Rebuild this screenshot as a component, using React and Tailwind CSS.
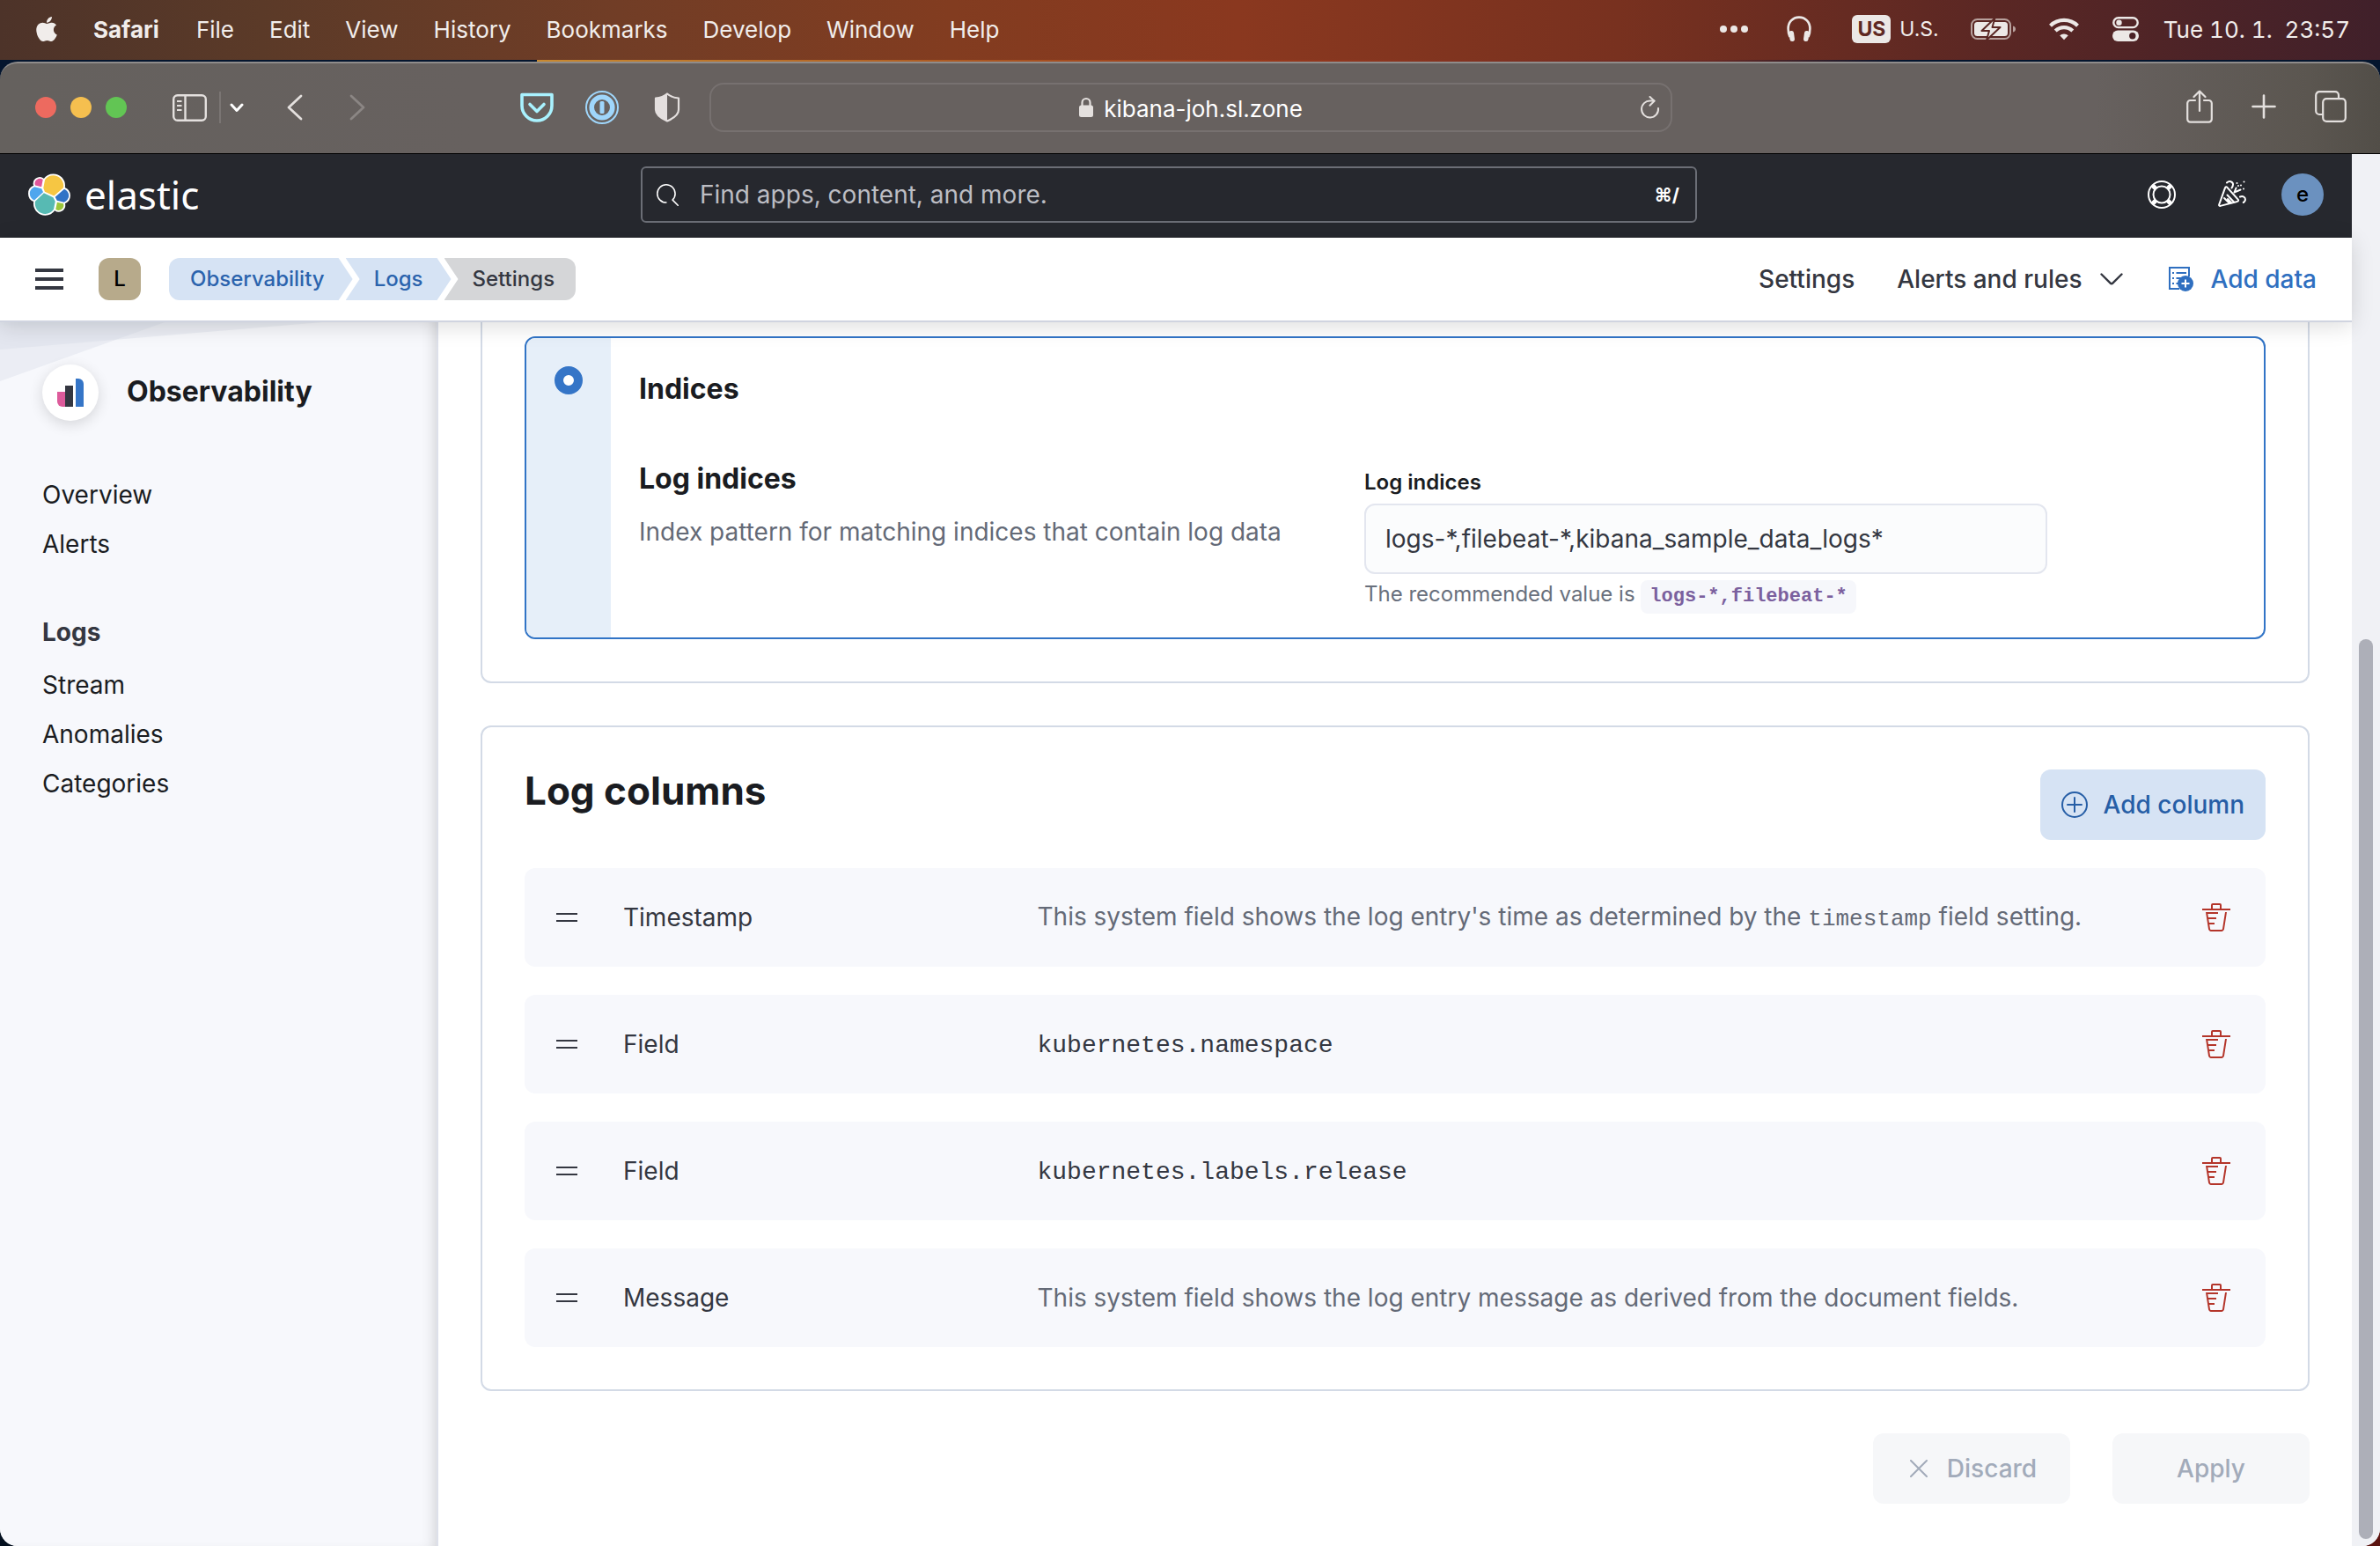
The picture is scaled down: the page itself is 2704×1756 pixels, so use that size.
import React from "react";
import { FaApple } from "react-icons/fa";

const menus = ["File", "Edit", "View", "History", "Bookmarks", "Develop", "Window", "Help"];

function HeadphonesIcon() {
  return (
    <svg className="h-[30px] w-7" viewBox="0 0 28 30" fill="none">
      <path d="M3.500 24C1.600 20 1.600 17.500 1.600 14.500 1.600 7.500 6.500 1.600 14 1.600S26.400 7.500 26.400 14.500c0 3 0 5.500-1.900 9.500" stroke="#ece8e6" strokeWidth="2.600" />
      <rect x="3" y="17" width="5.500" height="12" rx="2.700" fill="#ece8e6" transform="rotate(-8 5.700 23)" />
      <rect x="19.500" y="17" width="5.500" height="12" rx="2.700" fill="#ece8e6" transform="rotate(8 22.300 23)" />
    </svg>
  );
}

function BatteryIcon() {
  return (
    <svg className="h-[26px] w-[52px]" viewBox="0 0 52 26" fill="none">
      <rect x="1" y="2" width="44" height="22" rx="6.500" stroke="#b8a19d" strokeWidth="2" />
      <path d="M48 9.500c2 .6 3 1.800 3 3.500s-1 2.900-3 3.500z" fill="#b8a19d" />
      <rect x="4" y="5" width="38" height="16" rx="3.500" fill="#ece8e6" />
      <path d="M27.500 0.500 12.500 15h8.500L18 25.500l15.500-14.500h-9z" fill="#ece8e6" stroke="#5a2724" strokeWidth="2" strokeLinejoin="round" />
    </svg>
  );
}

function WifiIcon() {
  return (
    <svg className="h-[26px] w-[34px]" viewBox="0 0 34 26" fill="none" stroke="#ece8e6">
      <path d="M1.500 9.200a22.300 22.300 0 0 1 31 0" strokeWidth="4.200" />
      <path d="M7.200 15a14.200 14.200 0 0 1 19.600 0" strokeWidth="4.200" />
      <path d="M17 25.200l-4.800-4.900a7 7 0 0 1 9.600 0z" fill="#ece8e6" stroke="none" />
    </svg>
  );
}

function ControlCenterIcon() {
  return (
    <svg className="h-7 w-[30px]" viewBox="0 0 30 28" fill="none">
      <rect x="1.300" y="1.300" width="27.400" height="10.800" rx="5.400" stroke="#ece8e6" strokeWidth="2.400" />
      <circle cx="7.500" cy="6.700" r="3.200" fill="#ece8e6" />
      <rect x="0" y="15.500" width="30" height="12.500" rx="6.200" fill="#ece8e6" />
      <circle cx="22.800" cy="21.700" r="3.700" fill="#4a2226" />
    </svg>
  );
}

function MenuBar() {
  return (
    <header className="flex h-[68px] shrink-0 items-center bg-[linear-gradient(90deg,#4d3329_0%,#5b3a28_11%,#713d26_26%,#823c20_40%,#8a381f_52%,#78311f_68%,#5a2724_84%,#40202a_100%)] pr-[34px] pb-0.5 pl-[38px] text-[26px] text-[#f1edeb]">
      <button aria-label="Apple menu" className="mr-[38px]">
        <FaApple className="h-8 w-[30px]" />
      </button>
      <button className="mr-[42px] font-bold">Safari</button>
      <nav className="flex gap-10">
        {menus.map((m) => (
          <button key={m}>{m}</button>
        ))}
      </nav>
      <div className="ml-auto flex items-center">
        <svg className="mr-11 h-2 w-8" viewBox="0 0 32 8" fill="#ece8e6">
          <circle cx="4" cy="4" r="4" />
          <circle cx="16" cy="4" r="4" />
          <circle cx="28" cy="4" r="4" />
        </svg>
        <HeadphonesIcon />
        <span className="mr-2.5 ml-[46px] rounded-md bg-[#ece8e6] px-1.5 text-[23px] leading-8 font-bold text-[#5f2823]">US</span>
        <span className="mr-9 text-[23px]">U.S.</span>
        <BatteryIcon />
        <span className="w-[37px]" />
        <WifiIcon />
        <span className="w-[38px]" />
        <ControlCenterIcon />
        <time className="ml-7 whitespace-pre tabular-nums">Tue 10. 1.  23:57</time>
      </div>
    </header>
  );
}

function BrowserBar() {
  return (
    <div className="flex h-[105px] shrink-0 items-center rounded-t-[20px] border-t-2 border-b border-t-[#8f8c8b] border-b-black bg-[linear-gradient(90deg,#65615e_0%,#67615f_20%,#67615f_88%,#5b5650_97%,#524e48_100%)]">
      <div className="flex flex-1 items-center pb-0.5 pl-10">
        <div className="flex gap-4">
          <button aria-label="Close window" className="size-6 rounded-full bg-[#ed6a5f]" />
          <button aria-label="Minimize window" className="size-6 rounded-full bg-[#f5bf4f]" />
          <button aria-label="Zoom window" className="size-6 rounded-full bg-[#62c554]" />
        </div>
        <button aria-label="Sidebar" className="ml-[52px]">
          <svg className="h-[31px] w-[39px]" viewBox="0 0 39 31" fill="none" stroke="#e4e0de" strokeWidth="2.400">
            <rect x="1.200" y="1.200" width="36.600" height="28.600" rx="4.500" />
            <path d="M14.500 1.200v28.600" />
            <path d="M5 8h5.500M5 13h5.500M5 18h5.500" strokeWidth="1.800" />
          </svg>
        </button>
        <span className="ml-3.5 h-9 w-0.5 bg-[#7a7573]" />
        <button aria-label="Tab groups" className="ml-2.5">
          <svg className="h-[11px] w-4" viewBox="0 0 16 11" fill="none" stroke="#fff" strokeWidth="3" strokeLinecap="round" strokeLinejoin="round">
            <path d="M2 2l6 6.500L14 2" />
          </svg>
        </button>
        <button aria-label="Back" className="ml-12">
          <svg className="h-[30px] w-[19px]" viewBox="0 0 19 30" fill="none" stroke="#e4e0de" strokeWidth="2.800" strokeLinecap="round" strokeLinejoin="round">
            <path d="M17 2 3 15l14 13" />
          </svg>
        </button>
        <button aria-label="Forward" className="ml-[53px]">
          <svg className="h-[30px] w-[19px]" viewBox="0 0 19 30" fill="none" stroke="#8b8684" strokeWidth="2.800" strokeLinecap="round" strokeLinejoin="round">
            <path d="M2 2l14 13L2 28" />
          </svg>
        </button>
        <button aria-label="Pocket" className="ml-[175px]">
          <svg className="h-[34px] w-[38px]" viewBox="0 0 38 34" fill="none" stroke="#a9f2ff" strokeWidth="3.600" strokeLinecap="round" strokeLinejoin="round">
            <path d="M2 2.500h34v12.500a17 17 0 0 1-34 0z" />
            <path d="M11 13.500l8 8 8-8" />
          </svg>
        </button>
        <button aria-label="1Password" className="ml-9">
          <svg className="size-[38px]" viewBox="0 0 38 38" fill="none">
            <circle cx="19" cy="19" r="18" stroke="#9fd6fb" strokeWidth="2" />
            <circle cx="19" cy="19" r="11.800" stroke="#9fd6fb" strokeWidth="5.600" />
            <rect x="16.500" y="12" width="5" height="14" rx="1.500" fill="#9fd6fb" />
          </svg>
        </button>
        <button aria-label="Privacy report" className="ml-10">
          <svg className="h-[34px] w-[30px]" viewBox="0 0 30 34" fill="none">
            <path d="M15 1.500c3 2.600 7.500 4.500 13 5v13c0 6-5 9.500-13 13-8-3.500-13-7-13-13v-13c5.500-.5 10-2.400 13-5z" stroke="#e4dfde" strokeWidth="2.200" strokeLinejoin="round" />
            <path d="M15 1.500c-3 2.600-7.500 4.500-13 5v13c0 6 5 9.500 13 13z" fill="#e4dfde" />
          </svg>
        </button>
      </div>
      <div className="relative mb-0.5 flex h-14 w-[1094px] items-center justify-center gap-3 rounded-2xl border-2 border-[#777170]">
        <svg className="h-6 w-4" viewBox="0 0 16 24">
          <path d="M3.500 10V6.500a4.500 4.500 0 0 1 9 0V10" fill="none" stroke="#e4e0de" strokeWidth="2.200" />
          <rect x="0" y="9.500" width="16" height="13.500" rx="2.500" fill="#e4e0de" />
        </svg>
        <span className="pt-0.5 text-[26px] text-white">kibana-joh.sl.zone</span>
        <button aria-label="Reload" className="absolute right-3">
          <svg className="h-[26px] w-[22px]" viewBox="0 0 22 26" fill="none" stroke="#e4e0de" strokeWidth="2" strokeLinecap="round" strokeLinejoin="round">
            <path d="M20 14a9.500 9.500 0 1 1-9-8.500h4.500" />
            <path d="M10.500 1l5 4.700-5 5" />
          </svg>
        </button>
      </div>
      <div className="flex flex-1 items-center justify-end gap-11 pr-[38px] pb-1">
        <button aria-label="Share">
          <svg className="h-[38px] w-[30px]" viewBox="0 0 30 38" fill="none" stroke="#e4e0de" strokeWidth="2.200" strokeLinecap="round" strokeLinejoin="round">
            <path d="M10 12H4.500A3.300 3.300 0 0 0 1.200 15.300v18a3.300 3.300 0 0 0 3.300 3.300h21a3.300 3.300 0 0 0 3.300-3.300v-18A3.300 3.300 0 0 0 25.500 12H20" />
            <path d="M15 24V1.500M8.500 8 15 1.500 21.500 8" />
          </svg>
        </button>
        <button aria-label="New tab">
          <svg className="size-7" viewBox="0 0 28 28" stroke="#e4e0de" strokeWidth="2.600" strokeLinecap="round">
            <path d="M14 1.500v25M1.500 14h25" />
          </svg>
        </button>
        <button aria-label="Tab overview">
          <svg className="size-9" viewBox="0 0 36 36" fill="none" stroke="#e4e0de" strokeWidth="2.200" strokeLinejoin="round">
            <rect x="9.200" y="9.200" width="25.600" height="25.600" rx="4" />
            <path d="M9 27H5.200a4 4 0 0 1-4-4V5.200a4 4 0 0 1 4-4H23a4 4 0 0 1 4 4V9" />
          </svg>
        </button>
      </div>
    </div>
  );
}

const blobs = [
  ["#f6c643", "M12.580 13.787l7.002 3.211 7.066-6.213a7.849 7.849 0 0 0 .152-1.557c0-4.287-3.464-7.775-7.721-7.775a7.711 7.711 0 0 0-6.379 3.378l-1.176 6.120 1.056 2.836z"],
  ["#57bab3", "M5.333 21.214a7.930 7.930 0 0 0-.150 1.580c0 4.300 3.474 7.797 7.744 7.797a7.739 7.739 0 0 0 6.412-3.404l1.166-6.102-1.556-2.988-7.030-3.216-6.586 6.333z"],
  ["#e0569b", "M5.288 9.067l4.800 1.137L11.140 4.721a3.785 3.785 0 0 0-5.852 4.346z"],
  ["#4fa6ee", "M4.872 10.214c-2.144.713-3.645 2.787-3.645 5.061 0 2.214 1.363 4.190 3.410 4.977l6.734-6.116-1.236-2.656-5.263-1.266z"],
  ["#9bc63b", "M20.870 27.185a3.720 3.720 0 0 0 2.275.785 3.786 3.786 0 0 0 3.589-5.082l-4.796-1.129-1.068 5.426z"],
  ["#3173c6", "M21.848 20.563l5.280 1.241c2.145-.713 3.646-2.787 3.646-5.061 0-2.212-1.365-4.184-3.414-4.971l-6.905 6.082 1.393 2.709z"],
];

function ElasticLogo() {
  return (
    <svg className="size-12" viewBox="0 0 32 32">
      <g fill="#fff" stroke="#fff" strokeWidth="2.400" strokeLinejoin="round">
        {blobs.map(([fill, d]) => (
          <path key={fill} d={d} />
        ))}
      </g>
      {blobs.map(([fill, d]) => (
        <path key={fill} d={d} fill={fill} />
      ))}
    </svg>
  );
}

function AppHeader() {
  return (
    <div className="flex h-[95px] items-center bg-[#26282e] pr-4 pb-[3px]">
      <div className="flex flex-1">
        <a href="#home" className="ml-8 flex items-center gap-4 font-['Noto_Sans',sans-serif] text-[44px] leading-[48px] text-white">
          <ElasticLogo />
          elastic
        </a>
      </div>
      <label className="flex h-16 w-[1200px] items-center rounded-md border-2 border-[#6b6e76] px-4">
        <svg className="size-[25px]" viewBox="0 0 16 16" fill="#fff">
          <path d="M11.271 11.978l3.872 3.873a.502.502 0 0 0 .708 0 .502.502 0 0 0 0-.708l-3.565-3.564c2.380-2.747 2.267-6.923-.342-9.532-2.730-2.730-7.170-2.730-9.898 0-2.728 2.729-2.728 7.170 0 9.900a6.955 6.955 0 0 0 4.949 2.050.5.5 0 0 0 0-1 5.960 5.960 0 0 1-4.242-1.757 6.010 6.010 0 0 1 0-8.486 6.004 6.004 0 0 1 8.484 0 6.010 6.010 0 0 1 0 8.486.5.5 0 0 0 .034.738z" />
        </svg>
        <input aria-label="Find apps, content, and more." placeholder="Find apps, content, and more." className="ml-6 min-w-0 flex-1 bg-transparent text-[28px] text-white outline-none placeholder:text-[#bcbdc3]" />
        <kbd className="pt-0.5 pr-0.5 font-['Inter','DejaVu_Sans',sans-serif] text-[21px] font-bold text-white">⌘/</kbd>
      </label>
      <div className="flex flex-1 items-center justify-end">
        <button aria-label="Help" className="mr-12">
          <svg className="size-8" viewBox="0 0 32 32" fill="none" stroke="#fff" strokeWidth="2">
            <circle cx="16" cy="16" r="15" />
            <circle cx="16" cy="16" r="9.500" />
            <path d="M5.500 5.500l4 4M26.500 5.500l-4 4M5.500 26.500l4-4M26.500 26.500l-4-4" strokeWidth="5" />
          </svg>
        </button>
        <button aria-label="News" className="mr-10">
          <svg className="size-8" viewBox="0 0 32 32" fill="none" stroke="#fff" strokeWidth="2" strokeLinecap="round" strokeLinejoin="round">
            <path d="M8 8.300c.5-1.200 1.600-1.300 2.400-.4l12.300 13.700c.8.900.4 2-.8 2.300L2.600 28.900c-1 .2-1.700-.5-1.400-1.500z" />
            <path d="M10.500 16.500l7.500 8M7 20l6 6M11 21l4 4.300" />
            <path d="M10 2.500c2.500-2.300 6.500-1.700 7 1.500.2 2-.8 3.400-1.500 4.500" />
            <path d="M18.500 13.500l2-5M18.500 13.500l7-3" />
            <path d="M25 18.500c3.500-1.500 6.500 1 5.800 4-.3 1.300-1 2-2 2.500" />
            <path d="M21.500 3v.1M29.500 1.500v.1M23 6v.1M29 9.500v.1M26 5.500v.1" />
          </svg>
        </button>
        <button aria-label="Account menu" className="mr-4 size-12 rounded-full bg-[#6b91bf] text-[24px] font-medium text-black">e</button>
      </div>
    </div>
  );
}

function SubHeader() {
  return (
    <div className="relative z-10 flex h-24 items-center border-b-2 border-[#d0d4e0] bg-white pr-10 pl-10 text-[28px] font-medium text-[#343741] shadow-[0_4px_24px_rgba(0,0,0,0.14)]">
      <button aria-label="Toggle navigation" className="flex w-8 flex-col gap-1.5">
        <span className="h-1 bg-[#343741]" />
        <span className="h-1 bg-[#343741]" />
        <span className="h-1 bg-[#343741]" />
      </button>
      <button aria-label="Space L" className="ml-10 size-12 rounded-xl bg-[#b7aa8b] text-[24px] text-black">L</button>
      <nav aria-label="Breadcrumb" className="ml-8 flex text-[24px] leading-[48px]">
        <a href="#observability" className="rounded-l-xl bg-[#d6e3f4] pr-8 pl-6 text-[#2b63ad] [clip-path:polygon(0_0,calc(100%-16px)_0,100%_50%,calc(100%-16px)_100%,0_100%)]">Observability</a>
        <a href="#logs" className="-ml-2 bg-[#d6e3f4] px-8 text-[#2b63ad] [clip-path:polygon(0_0,calc(100%-16px)_0,100%_50%,calc(100%-16px)_100%,0_100%,16px_50%)]">Logs</a>
        <span className="-ml-2 rounded-r-xl bg-[#d5d6d8] pr-6 pl-8 [clip-path:polygon(0_0,100%_0,100%_100%,0_100%,16px_50%)]">Settings</span>
      </nav>
      <div className="ml-auto flex items-center">
        <a href="#settings" className="mr-12">Settings</a>
        <button className="mr-[52px] flex items-center gap-5">
          Alerts and rules
          <svg className="h-3.5 w-[26px]" viewBox="0 0 26 14" fill="none" stroke="#343741" strokeWidth="2.400" strokeLinecap="round" strokeLinejoin="round">
            <path d="M1.500 1.500l10.200 10.200a1.800 1.800 0 0 0 2.600 0L24.500 1.500" />
          </svg>
        </button>
        <a href="#add" className="flex items-center gap-5 text-[#2f6fc0]">
          <svg className="size-7" viewBox="0 0 28 28" fill="none" stroke="#2f6fc0" strokeWidth="2">
            <path d="M12 25H1V1h22v10" />
            <path d="M8.500 7H20M8.500 13H14M8.500 19H11" />
            <path d="M4 7h2M4 13h2M4 19h2" />
            <circle cx="19" cy="19" r="9" fill="#2f6fc0" stroke="none" />
            <path d="M19 14.500v9M14.500 19h9" stroke="#fff" />
          </svg>
          Add data
        </a>
      </div>
    </div>
  );
}

function Sidebar() {
  return (
    <aside className="relative w-[498px] shrink-0 border-r-2 border-[#dde0ea] bg-[#f7f8fc] px-12 pt-12 text-[28px] leading-[56px] text-[#1a1c21] shadow-[inset_-12px_0_16px_-10px_rgba(0,0,0,0.16)]">
      <svg className="absolute top-0 left-0 h-[68px] w-[366px]" viewBox="0 0 366 68">
        <path d="M0 0h187L0 67z" fill="#d3dae6" fillOpacity="0.350" />
        <path d="M0 0h366L0 31z" fill="#d3dae6" fillOpacity="0.350" />
      </svg>
      <div className="relative flex items-center gap-8">
        <span className="flex size-16 items-center justify-center rounded-full bg-white shadow-[0_4px_16px_rgba(0,0,0,0.14)]">
          <svg className="h-8 w-[30px]" viewBox="0 0 30 32">
            <path d="M0 15h9v17H6a6 6 0 0 1-6-6z" fill="#dd5b9b" />
            <path d="M9 8h9v24H9z" fill="#343741" />
            <path d="M21 0h3a6 6 0 0 1 6 6v26h-9z" fill="#3575c7" />
          </svg>
        </span>
        <h2 className="pb-0.5 text-[32px] font-bold">Observability</h2>
      </div>
      <nav className="mt-14 flex flex-col">
        <a href="#overview">Overview</a>
        <a href="#alerts">Alerts</a>
        <h3 className="mt-11 mb-1 font-bold text-[#343741]">Logs</h3>
        <a href="#stream">Stream</a>
        <a href="#anomalies">Anomalies</a>
        <a href="#categories">Categories</a>
      </nav>
    </aside>
  );
}

function IndicesCard() {
  return (
    <section className="rounded-b-xl border-2 border-t-0 border-[#d3dae6] px-12 pt-4 pb-12">
      <div className="flex overflow-hidden rounded-xl border-2 border-[#3174c6]">
        <div className="w-24 shrink-0 bg-[#e6eff9] pt-8 pl-8">
          <input type="radio" id="indices" name="source" defaultChecked className="block size-8 appearance-none rounded-full border-[10px] border-[#3575c7] bg-white" />
        </div>
        <div className="min-w-0 flex-1 px-8 pt-[34px] pb-[27px]">
          <label htmlFor="indices" className="block text-[32px] leading-[48px] font-bold text-[#1a1c21]">Indices</label>
          <div className="mt-[46px] grid max-w-[1600px] grid-cols-2 gap-12">
            <div className="pt-2">
              <h3 className="text-[32px] leading-[48px] font-bold text-[#1a1c21]">Log indices</h3>
              <p className="mt-3 text-[28px] leading-[48px] text-[#646a77]">Index pattern for matching indices that contain log data</p>
            </div>
            <div className="pt-4">
              <label htmlFor="pattern" className="block text-[24px] leading-[40px] font-semibold text-[#1a1c21]">Log indices</label>
              <input id="pattern" defaultValue="logs-*,filebeat-*,kibana_sample_data_logs*" className="mt-1 block h-20 w-full rounded-xl border-2 border-[#e3e6ef] bg-[#fbfcfd] px-[22px] text-[28px] text-[#343741]" />
              <p className="mt-1 text-[24px] leading-[38px] text-[#69707d]">
                The recommended value is{" "}
                <code className="inline-block rounded-lg bg-[#f6f7fb] px-2.5 font-['Liberation_Mono',monospace] text-[22px] font-bold text-[#7b609e]">logs-*,filebeat-*</code>
              </p>
            </div>
          </div>
        </div>
      </div>
    </section>
  );
}

function TrashIcon() {
  return (
    <svg className="size-8" viewBox="0 0 16 16" fill="#b4352a">
      <path d="M11 3h5v1H0V3h5V1a1 1 0 0 1 1-1h4a1 1 0 0 1 1 1v2zm-7.056 8H7v1H4.100l.392 2.519c.042.269.254.458.493.458h6.030c.239 0 .451-.189.493-.458l1.498-9.576H14l-1.504 9.730c-.116.747-.740 1.304-1.481 1.304h-6.030c-.741 0-1.365-.557-1.481-1.304l-1.511-9.730H9V5.950H3.157L3.476 8H8v1H3.632l.312 2zM6 3h4V1H6v2z" />
    </svg>
  );
}

const mono = "pt-1 font-['Liberation_Mono',monospace] text-[#343741]";
const muted = "text-[#646a77]";

const rows = [
  {
    name: "Timestamp",
    tone: muted,
    body: (
      <>
        This system field shows the log entry's time as determined by the{" "}
        <code className="font-['Liberation_Mono',monospace] text-[26px]">timestamp</code> field setting.
      </>
    ),
  },
  { name: "Field", tone: mono, body: "kubernetes.namespace" },
  { name: "Field", tone: mono, body: "kubernetes.labels.release" },
  { name: "Message", tone: muted, body: "This system field shows the log entry message as derived from the document fields." },
];

function LogColumns() {
  return (
    <section className="mt-12 rounded-xl border-2 border-[#d3dae6] p-12">
      <div className="flex items-start justify-between">
        <h2 className="text-[44px] leading-[48px] font-bold text-[#1a1c21]">Log columns</h2>
        <button className="flex h-20 items-center gap-[18px] rounded-xl bg-[#d6e3f4] px-6 text-[28px] font-medium text-[#265ea6]">
          <svg className="size-[30px]" viewBox="0 0 30 30" fill="none" stroke="#265ea6" strokeWidth="2" strokeLinecap="round">
            <circle cx="15" cy="15" r="14" />
            <path d="M15 7v16M7 15h16" />
          </svg>
          Add column
        </button>
      </div>
      <ul className="mt-8 flex flex-col gap-8">
        {rows.map((r, i) => (
          <li key={i} className="flex h-28 items-center rounded-xl bg-[#f7f8fc] pr-4 text-[28px] text-[#343741]">
            <button aria-label={"Reorder " + r.name} className="flex w-28 flex-col gap-1.5 px-9">
              <span className="h-0.5 w-6 bg-[#343741]" />
              <span className="h-0.5 w-6 bg-[#343741]" />
            </button>
            <div className="mr-8 grid flex-1 grid-cols-[1fr_3fr] items-center gap-12">
              <span>{r.name}</span>
              <span className={r.tone}>{r.body}</span>
            </div>
            <button aria-label={"Remove " + r.name} className="flex size-20 items-center justify-center">
              <TrashIcon />
            </button>
          </li>
        ))}
      </ul>
    </section>
  );
}

export default function App() {
  return (
    <div className="flex min-h-screen flex-col bg-[linear-gradient(90deg,#04101f_0%,#04101f_50%,#5c1410_100%)] font-['Inter','Liberation_Sans',sans-serif]">
      <MenuBar />
      <div className="flex flex-1 flex-col bg-[linear-gradient(90deg,#04152e_0_610px,#c98a30_610px,#9a3a1c_52%,#6a2a24_72%,#04152e_80%)] bg-[length:100%_40px] bg-no-repeat pt-0.5">
        <BrowserBar />
        <div className="flex flex-1 overflow-hidden rounded-b-[20px] bg-white">
          <div className="flex min-w-0 flex-1 flex-col">
            <AppHeader />
            <SubHeader />
            <div className="flex flex-1">
              <Sidebar />
              <main className="min-w-0 flex-1 px-12 pb-12">
                <IndicesCard />
                <LogColumns />
                <div className="mt-12 flex justify-end gap-12 text-[28px] font-medium text-[#a2abba]">
                  <button disabled className="flex h-20 w-56 items-center justify-center gap-[22px] rounded-xl bg-[#f6f7f9] pl-1">
                    <svg className="size-5" viewBox="0 0 20 20" stroke="#a2abba" strokeWidth="2" strokeLinecap="round">
                      <path d="M1 1l18 18M19 1 1 19" />
                    </svg>
                    Discard
                  </button>
                  <button disabled className="h-20 w-56 rounded-xl bg-[#f6f7f9]">Apply</button>
                </div>
              </main>
            </div>
          </div>
          <div className="flex w-8 shrink-0 flex-col items-center bg-[#f0f1f5] pt-[551px] pb-2">
            <div className="w-4 flex-1 rounded-full bg-[#adafb8]" />
          </div>
        </div>
      </div>
    </div>
  );
}
